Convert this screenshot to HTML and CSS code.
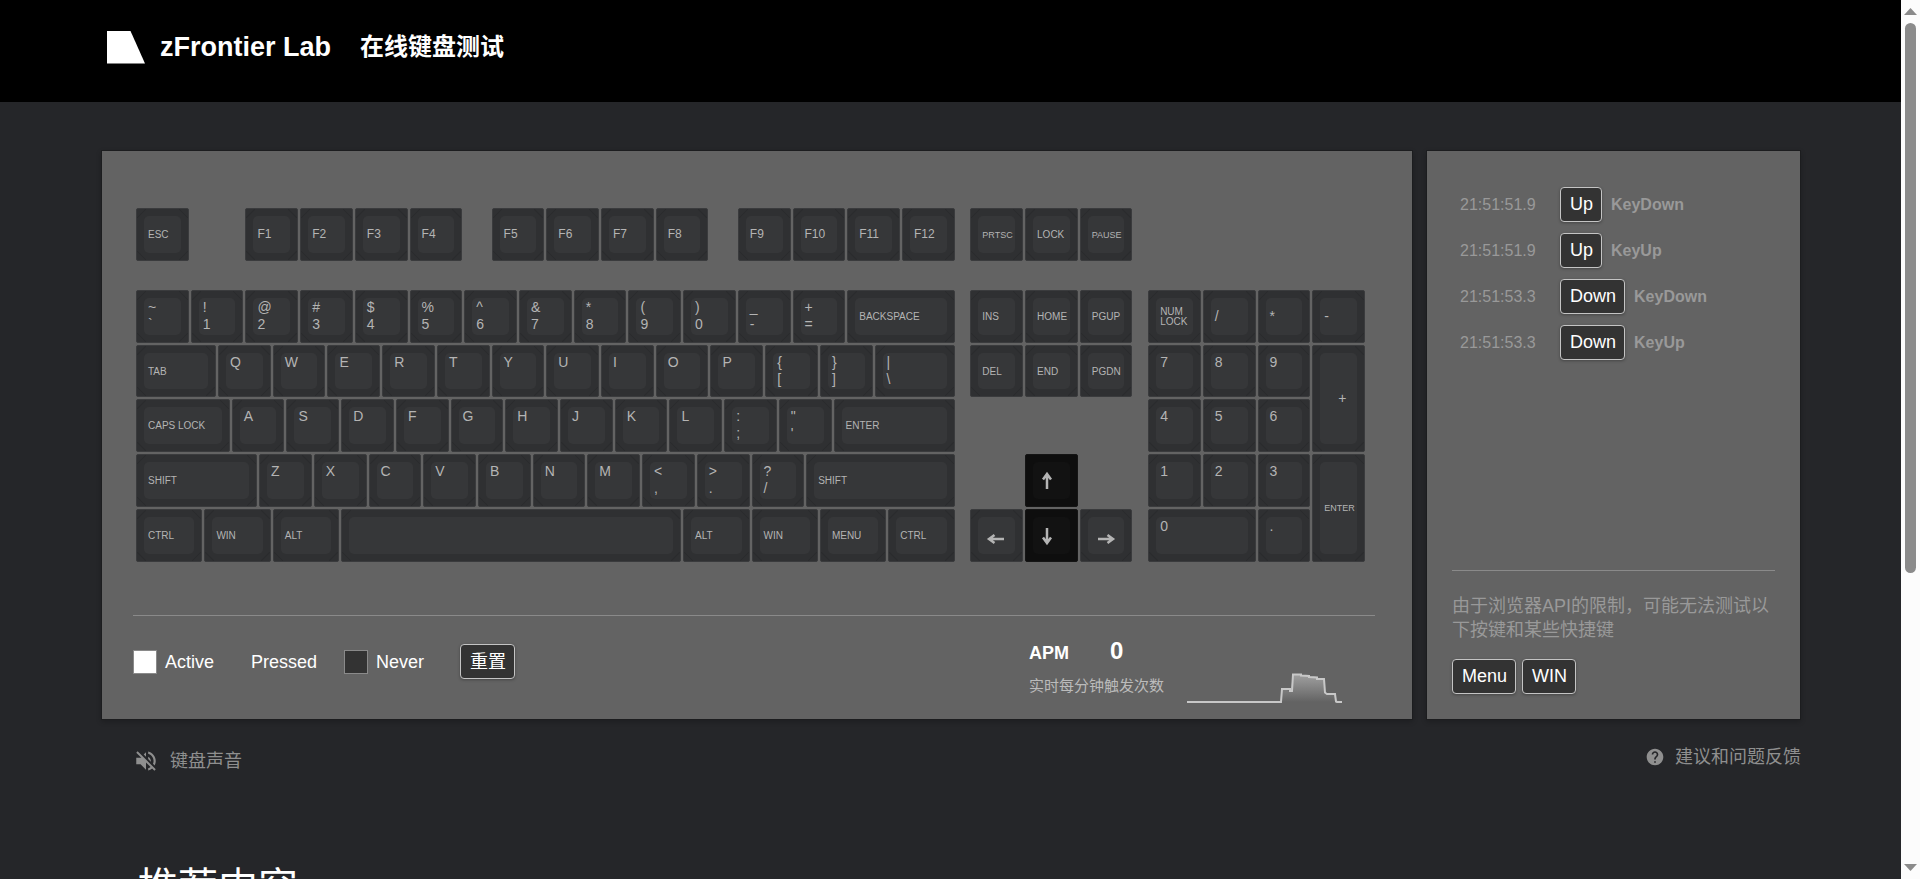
FILE: index.html
```html
<!DOCTYPE html>
<html lang="zh-CN">
<head>
<meta charset="utf-8">
<title>在线键盘测试 - zFrontier Lab</title>
<link rel="stylesheet" href="styles.css">
</head>
<body>
<div class="page">
  <header class="header">
    <svg class="logo" viewBox="0 0 38 33" aria-hidden="true"><path d="M0 0H23.500L38 32.500H0Z" fill="#fff"/></svg>
    <span class="brand">zFrontier Lab</span>
    <h1 class="title">在线键盘测试</h1>
  </header>

  <main class="content">
    <div class="panels">
      <section class="panel tester">
        <div class="board">
          <button class="key small"><span class="cap">ESC</span></button>
          <span class="w4"></span>
          <button class="key fn"><span class="cap">F1</span></button>
          <button class="key fn"><span class="cap">F2</span></button>
          <button class="key fn"><span class="cap">F3</span></button>
          <button class="key fn"><span class="cap">F4</span></button>
          <span class="w2"></span>
          <button class="key fn"><span class="cap">F5</span></button>
          <button class="key fn"><span class="cap">F6</span></button>
          <button class="key fn"><span class="cap">F7</span></button>
          <button class="key fn"><span class="cap">F8</span></button>
          <span class="w2"></span>
          <button class="key fn"><span class="cap">F9</span></button>
          <button class="key fn"><span class="cap">F10</span></button>
          <button class="key fn"><span class="cap">F11</span></button>
          <button class="key fn"><span class="cap">F12</span></button>
          <span class="w1"></span>
          <button class="key tiny"><span class="cap">PRTSC</span></button>
          <button class="key small"><span class="cap">LOCK</span></button>
          <button class="key tiny"><span class="cap">PAUSE</span></button>
          <span class="w17"></span>

          <span class="row-gap"></span>

          <button class="key"><span class="cap">~<br>`</span></button>
          <button class="key"><span class="cap">!<br>1</span></button>
          <button class="key"><span class="cap">@<br>2</span></button>
          <button class="key"><span class="cap">#<br>3</span></button>
          <button class="key"><span class="cap">$<br>4</span></button>
          <button class="key"><span class="cap">%<br>5</span></button>
          <button class="key"><span class="cap">^<br>6</span></button>
          <button class="key"><span class="cap">&amp;<br>7</span></button>
          <button class="key"><span class="cap">*<br>8</span></button>
          <button class="key"><span class="cap">(<br>9</span></button>
          <button class="key"><span class="cap">)<br>0</span></button>
          <button class="key"><span class="cap">_<br>-</span></button>
          <button class="key"><span class="cap">+<br>=</span></button>
          <button class="key small w8"><span class="cap">BACKSPACE</span></button>
          <span class="w1"></span>
          <button class="key small"><span class="cap">INS</span></button>
          <button class="key small"><span class="cap">HOME</span></button>
          <button class="key small"><span class="cap">PGUP</span></button>
          <span class="w1"></span>
          <button class="key small"><span class="cap">NUM<br>LOCK</span></button>
          <button class="key middle"><span class="cap">/</span></button>
          <button class="key middle"><span class="cap">*</span></button>
          <button class="key middle"><span class="cap">-</span></button>

          <button class="key small w6"><span class="cap">TAB</span></button>
          <button class="key"><span class="cap">Q</span></button>
          <button class="key"><span class="cap">W</span></button>
          <button class="key"><span class="cap">E</span></button>
          <button class="key"><span class="cap">R</span></button>
          <button class="key"><span class="cap">T</span></button>
          <button class="key"><span class="cap">Y</span></button>
          <button class="key"><span class="cap">U</span></button>
          <button class="key"><span class="cap">I</span></button>
          <button class="key"><span class="cap">O</span></button>
          <button class="key"><span class="cap">P</span></button>
          <button class="key"><span class="cap">{<br>[</span></button>
          <button class="key"><span class="cap">}<br>]</span></button>
          <button class="key w6"><span class="cap">|<br>\</span></button>
          <span class="w1"></span>
          <button class="key small"><span class="cap">DEL</span></button>
          <button class="key small"><span class="cap">END</span></button>
          <button class="key small"><span class="cap">PGDN</span></button>
          <span class="w1"></span>
          <button class="key"><span class="cap">7</span></button>
          <button class="key"><span class="cap">8</span></button>
          <button class="key"><span class="cap">9</span></button>
          <button class="key middle tall plus"><span class="cap">+</span></button>

          <button class="key small w7"><span class="cap">CAPS LOCK</span></button>
          <button class="key"><span class="cap">A</span></button>
          <button class="key"><span class="cap">S</span></button>
          <button class="key"><span class="cap">D</span></button>
          <button class="key"><span class="cap">F</span></button>
          <button class="key"><span class="cap">G</span></button>
          <button class="key"><span class="cap">H</span></button>
          <button class="key"><span class="cap">J</span></button>
          <button class="key"><span class="cap">K</span></button>
          <button class="key"><span class="cap">L</span></button>
          <button class="key"><span class="cap">:<br>;</span></button>
          <button class="key"><span class="cap">"<br>'</span></button>
          <button class="key small w9"><span class="cap">ENTER</span></button>
          <span class="w14"></span>
          <button class="key"><span class="cap">4</span></button>
          <button class="key"><span class="cap">5</span></button>
          <button class="key"><span class="cap">6</span></button>

          <button class="key small w9"><span class="cap">SHIFT</span></button>
          <button class="key"><span class="cap">Z</span></button>
          <button class="key"><span class="cap">X</span></button>
          <button class="key"><span class="cap">C</span></button>
          <button class="key"><span class="cap">V</span></button>
          <button class="key"><span class="cap">B</span></button>
          <button class="key"><span class="cap">N</span></button>
          <button class="key"><span class="cap">M</span></button>
          <button class="key"><span class="cap">&lt;<br>,</span></button>
          <button class="key"><span class="cap">&gt;<br>.</span></button>
          <button class="key"><span class="cap">?<br>/</span></button>
          <button class="key small w11"><span class="cap">SHIFT</span></button>
          <span class="w5"></span>
          <button class="key middle pressed" aria-label="Up"><span class="cap"><svg class="arrow" viewBox="0 0 20 20"><path d="M10 18V4M6 8.500L10 3L14 8.500"/></svg></span></button>
          <span class="w5"></span>
          <button class="key"><span class="cap">1</span></button>
          <button class="key"><span class="cap">2</span></button>
          <button class="key"><span class="cap">3</span></button>
          <button class="key tiny tall"><span class="cap">ENTER</span></button>

          <button class="key small w5"><span class="cap">CTRL</span></button>
          <button class="key small w5"><span class="cap">WIN</span></button>
          <button class="key small w5"><span class="cap">ALT</span></button>
          <button class="key w25" aria-label="Space"><span class="cap"></span></button>
          <button class="key small w5"><span class="cap">ALT</span></button>
          <button class="key small w5"><span class="cap">WIN</span></button>
          <button class="key small w5"><span class="cap">MENU</span></button>
          <button class="key small w5"><span class="cap">CTRL</span></button>
          <span class="w1"></span>
          <button class="key middle side" aria-label="Left"><span class="cap"><svg class="arrow" viewBox="0 0 20 20"><path d="M18 10H4M8.500 6L3 10L8.500 14"/></svg></span></button>
          <button class="key middle pressed" aria-label="Down"><span class="cap"><svg class="arrow" viewBox="0 0 20 20"><path d="M10 2V16M6 11.500L10 17L14 11.500"/></svg></span></button>
          <button class="key middle side" aria-label="Right"><span class="cap"><svg class="arrow" viewBox="0 0 20 20"><path d="M2 10H16M11.500 6L17 10L11.500 14"/></svg></span></button>
          <span class="w1"></span>
          <button class="key w8"><span class="cap">0</span></button>
          <button class="key"><span class="cap">.</span></button>
        </div>

        <div class="status">
          <div class="legend">
            <span class="legend-item"><i class="swatch swatch-active"></i>Active</span>
            <span class="legend-item legend-pressed">Pressed</span>
            <span class="legend-item"><i class="swatch swatch-never"></i>Never</span>
            <button class="chip reset">重置</button>
          </div>
          <div class="apm">
            <div class="apm-text">
              <div class="apm-head"><span class="apm-name">APM</span><span class="apm-value">0</span></div>
              <div class="apm-note">实时每分钟触发次数</div>
            </div>
            <svg class="chart" viewBox="0 0 160 34" aria-hidden="true">
              <defs><linearGradient id="fade" x1="0" y1="0" x2="0" y2="1"><stop offset="0" stop-color="#a0a0a0"/><stop offset="1" stop-color="#636363"/></linearGradient></defs>
              <path d="M94 31L96 18L105 20L107 3.500L115 4L115 4.500L123 4.500V5.500L131 6V7.500L138 8L139 22L149 23L151 31Z" fill="url(#fade)"/>
              <path d="M1 31H95L96 18H104V20H106L107 3.500H115V4.500L123 5V6L131 6.500V8H138L139 21.500L141 23H149L150 30.500L151 31H156" fill="none" stroke="#c8c8c8" stroke-width="2"/>
            </svg>
          </div>
        </div>
      </section>

      <aside class="panel side-panel">
        <ul class="log">
          <li><time>21:51:51.9</time><kbd class="chip">Up</kbd><b>KeyDown</b></li>
          <li><time>21:51:51.9</time><kbd class="chip">Up</kbd><b>KeyUp</b></li>
          <li><time>21:51:53.3</time><kbd class="chip">Down</kbd><b>KeyDown</b></li>
          <li><time>21:51:53.3</time><kbd class="chip">Down</kbd><b>KeyUp</b></li>
        </ul>
        <div class="limits">
          <p>由于浏览器API的限制，可能无法测试以下按键和某些快捷键</p>
          <div class="chips"><kbd class="chip">Menu</kbd><kbd class="chip">WIN</kbd></div>
        </div>
      </aside>
    </div>

    <div class="links">
      <button class="link sound">
        <svg class="icon-sound" viewBox="0 0 24 24" aria-hidden="true"><path d="M16.500 12c0-1.770-1.020-3.290-2.500-4.030v2.210l2.450 2.450c.03-.2.050-.41.050-.63zm2.500 0c0 .94-.2 1.820-.54 2.640l1.510 1.510C20.630 14.910 21 13.500 21 12c0-4.280-2.990-7.860-7-8.770v2.060c2.890.86 5 3.540 5 6.710zM4.270 3L3 4.270 7.730 9H3v6h4l5 5v-6.730l4.250 4.250c-.67.52-1.420.93-2.250 1.180v2.060c1.380-.31 2.630-.95 3.690-1.810L19.730 21 21 19.730l-9-9L4.270 3zM12 4L9.910 6.090 12 8.180V4z"/></svg>
        键盘声音
      </button>
      <a class="link help" href="#feedback">
        <svg class="icon-help" viewBox="0 0 24 24" aria-hidden="true"><path d="M12 2C6.480 2 2 6.480 2 12s4.480 10 10 10 10-4.480 10-10S17.520 2 12 2zm1 17h-2v-2h2v2zm2.070-7.750l-.9.920C13.450 12.900 13 13.500 13 15h-2v-.5c0-1.100.45-2.100 1.170-2.830l1.240-1.260c.37-.36.590-.86.590-1.410 0-1.100-.9-2-2-2s-2 .9-2 2H8c0-2.210 1.790-4 4-4s4 1.790 4 4c0 .88-.36 1.680-.93 2.250z"/></svg>
        建议和问题反馈
      </a>
    </div>

    <h2 class="recommend">推荐内容</h2>
  </main>
</div>
<div class="scrollbar" aria-hidden="true">
  <svg class="scroll-arrow" viewBox="0 0 13 7"><path d="M0 7L6.500 0L13 7Z"/></svg>
  <div class="scroll-track"><div class="scroll-thumb"></div></div>
  <svg class="scroll-arrow" viewBox="0 0 13 7"><path d="M0 0H13L6.500 7Z"/></svg>
</div>
</body>
</html>
```
FILE: styles.css
```css
* { box-sizing: border-box; }

body {
  margin: 0;
  height: 100vh;
  display: flex;
  overflow: hidden;
  background: #252629;
  font-family: "Liberation Sans", "Noto Sans CJK SC", sans-serif;
  font-size: 18px;
  color: #fff;
}

button, kbd { font-family: inherit; }

.page {
  flex: 1;
  min-width: 0;
  overflow: hidden;
}

/* Header */
.header {
  display: flex;
  align-items: center;
  height: 102px;
  padding: 0 107px 8px;
  background: #000;
}
.logo { width: 38px; height: 33px; }
.brand {
  margin-left: 15px;
  font-size: 27px;
  line-height: 32px;
  font-weight: bold;
}
.title {
  margin: 0 0 0 29px;
  font-size: 24px;
  line-height: 32px;
  font-weight: bold;
}

/* Panels */
.content { padding: 48px 100px 0 101px; }
.panels { display: flex; gap: 13px; }
.panel {
  background: #636363;
  border: 1px solid #1c1d1f;
  box-shadow: 0 2px 5px rgba(0, 0, 0, .2);
}
.tester {
  flex: 1;
  min-width: 0;
  padding: 56px 37px 14px 31px;
}
.side-panel {
  flex: none;
  display: flex;
  flex-direction: column;
  justify-content: space-between;
  width: 375px;
  padding: 36px 25px 25px;
}

/* Keyboard: 90 columns, four of them to one key unit */
.board {
  display: grid;
  grid-template-columns: repeat(90, minmax(0, 1fr));
  grid-template-rows: minmax(0, 4fr) minmax(0, 2fr) repeat(5, minmax(0, 4fr));
  aspect-ratio: 90 / 26;
  margin: 0 9px 52px 2px;
}
.row-gap { grid-column: 1 / -1; }
.key {
  grid-column: span 4;
  display: flex;
  margin: 1px;
  padding: 7px;
  border: 1px solid #3a3b3d;
  border-radius: 2px;
  background:
    linear-gradient(45deg, transparent 42%, #2a2b2d 50%, transparent 58%) left bottom / 9px 9px no-repeat,
    linear-gradient(45deg, transparent 42%, #2a2b2d 50%, transparent 58%) right top / 9px 9px no-repeat,
    linear-gradient(135deg, transparent 42%, #2a2b2d 50%, transparent 58%) left top / 9px 9px no-repeat,
    linear-gradient(135deg, transparent 42%, #2a2b2d 50%, transparent 58%) right bottom / 9px 9px no-repeat,
    #2f3032;
  color: #b4b4b4;
  font-size: 14px;
  line-height: 17px;
  text-align: left;
}
.cap {
  flex: 1;
  min-width: 0;
  height: 100%;
  padding: 1px 0 0 4px;
  border-radius: 5px;
  background: #363739;
}
.small .cap, .tiny .cap, .fn .cap, .middle .cap {
  display: grid;
  align-content: center;
}
.small { font-size: 10px; line-height: 10px; }
.tiny { font-size: 9px; line-height: 10px; }
.fn { font-size: 12px; }
.tall { grid-row: span 2; }
.plus .cap { padding-left: 18px; }
.side .cap { padding: 8px 0 0 8px; }
.pressed { background: #0e0e0e; border-color: #151515; }
.pressed .cap { background: #121212; }
.arrow {
  width: 20px;
  height: 20px;
  fill: none;
  stroke: #b4b4b4;
  stroke-width: 2.5;
}

.w1 { grid-column: span 1; }
.w2 { grid-column: span 2; }
.w4 { grid-column: span 4; }
.w5 { grid-column: span 5; }
.w6 { grid-column: span 6; }
.w7 { grid-column: span 7; }
.w8 { grid-column: span 8; }
.w9 { grid-column: span 9; }
.w11 { grid-column: span 11; }
.w14 { grid-column: span 14; }
.w17 { grid-column: span 17; }
.w25 { grid-column: span 25; }

/* Legend and APM */
.status {
  display: flex;
  justify-content: space-between;
  padding-top: 21px;
  border-top: 1px solid #8a8a8a;
}
.legend {
  display: flex;
  align-items: center;
  gap: 27px;
  height: 50px;
  line-height: 24px;
}
.legend-item { display: flex; align-items: center; gap: 8px; }
.legend-pressed { padding-left: 10px; }
.swatch {
  width: 24px;
  height: 24px;
  border: 1px solid #8a8a8a;
}
.swatch-active { background: #fff; }
.swatch-never { background: #333; }
.chip {
  display: block;
  height: 35px;
  padding: 0 8px 0 9px;
  border: 1px solid #c4c4c4;
  border-radius: 4px;
  background: #333;
  box-shadow: 0 1px 3px rgba(0, 0, 0, .3);
  color: #fff;
  font-size: 18px;
  line-height: 32px;
}
.reset { margin-left: 9px; }
.apm {
  display: flex;
  align-items: flex-end;
  gap: 22px;
  margin-right: 29px;
}
.apm-head {
  display: flex;
  align-items: baseline;
  gap: 41px;
  line-height: 28px;
}
.apm-name { font-weight: bold; }
.apm-value { font-size: 24px; font-weight: bold; }
.apm-note {
  margin: 7px 0 7px;
  color: #bbb;
  font-size: 15px;
  line-height: 24px;
}
.chart { width: 160px; height: 34px; }

/* Event log */
.log {
  display: flex;
  flex-direction: column;
  gap: 11px;
  margin: 0;
  padding: 0 0 0 8px;
  list-style: none;
  color: #999;
  font-size: 16px;
}
.log li { display: flex; align-items: center; line-height: 33px; }
.log time { width: 100px; }
.log b { margin-left: 9px; }
.limits {
  padding-top: 23px;
  border-top: 1px solid #8a8a8a;
}
.limits p {
  margin: 0 0 17px;
  color: #999;
  line-height: 24px;
}
.chips { display: flex; gap: 6px; }

/* Below the panels */
.links {
  display: flex;
  justify-content: space-between;
  align-items: flex-start;
  padding: 24px 0 0 32px;
}
.link {
  display: flex;
  align-items: center;
  padding: 0;
  border: 0;
  background: none;
  color: #8f8f8f;
  font-size: 18px;
  line-height: 26px;
  text-decoration: none;
}
.link svg { fill: #8f8f8f; }
.sound { gap: 11px; padding-top: 4px; }
.help { gap: 10px; }
.icon-sound { width: 26px; height: 26px; }
.icon-help { width: 20px; height: 20px; }
.recommend {
  margin: 85px 0 0 37px;
  font-size: 40px;
  line-height: 56px;
  font-weight: 400;
}

/* Scrollbar */
.scrollbar {
  flex: none;
  display: flex;
  flex-direction: column;
  align-items: center;
  gap: 8px;
  width: 19px;
  padding: 8px 0;
  background: #fcfcfc;
}
.scroll-arrow { width: 13px; height: 7px; fill: #8b8b8b; }
.scroll-track { flex: 1; width: 11px; }
.scroll-thumb {
  height: 66%;
  border-radius: 6px;
  background: #8b8b8b;
}
```
